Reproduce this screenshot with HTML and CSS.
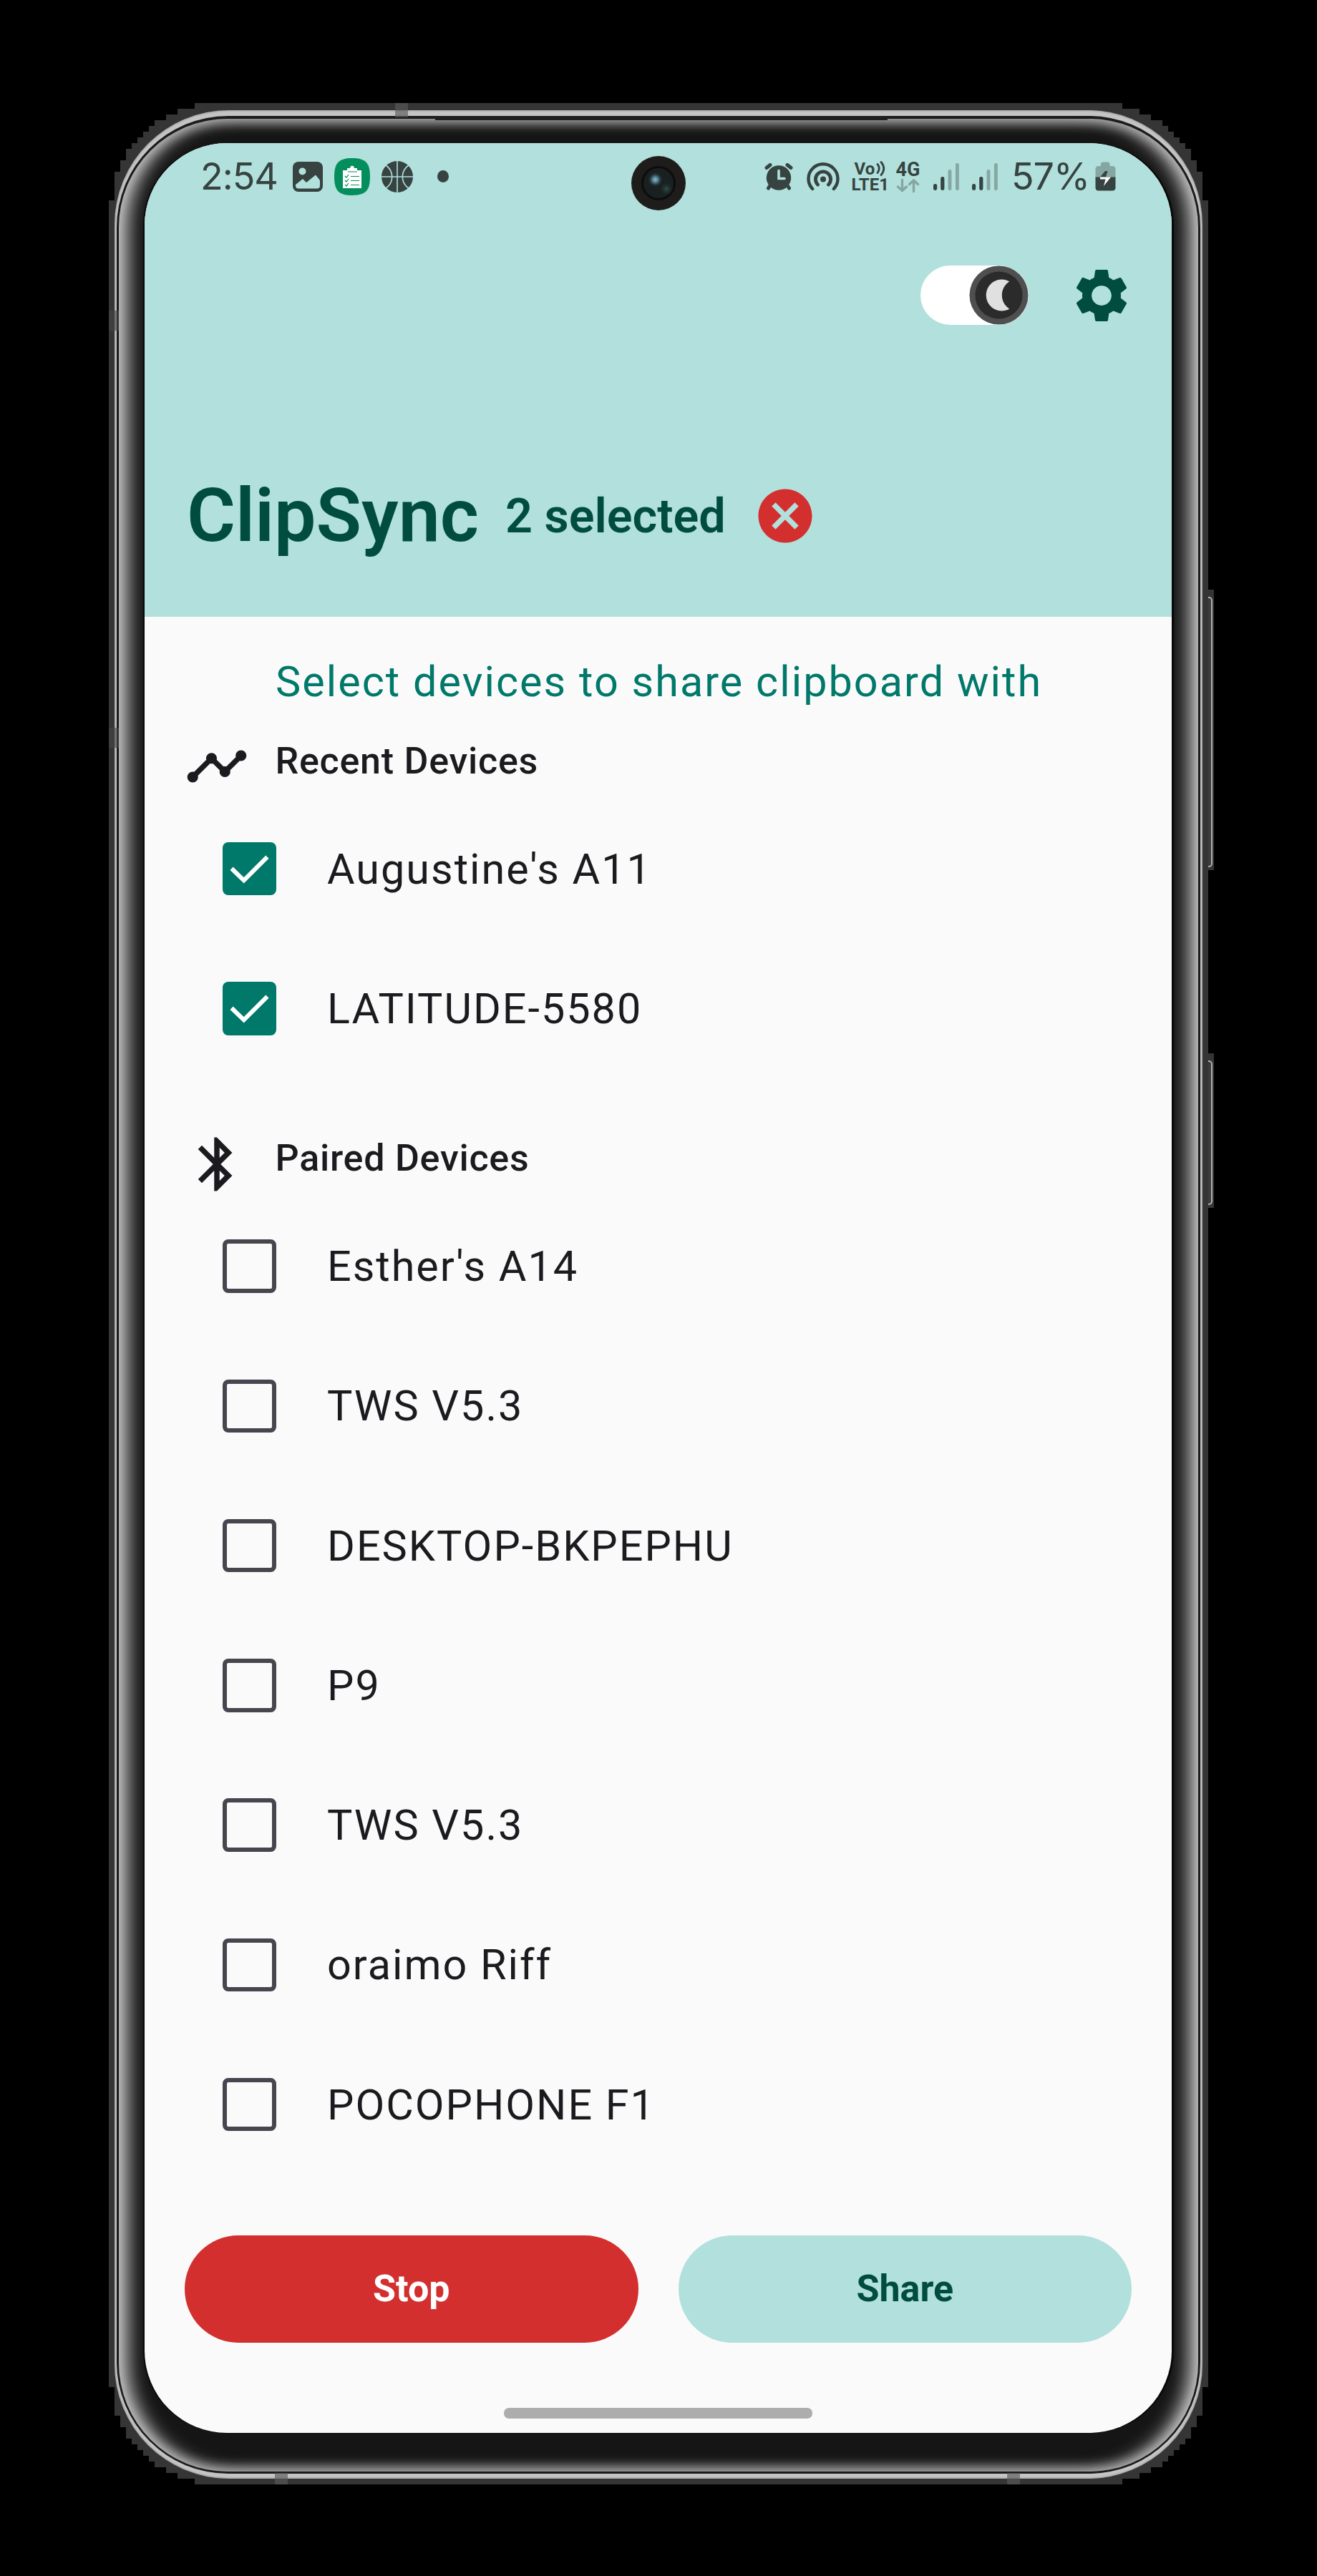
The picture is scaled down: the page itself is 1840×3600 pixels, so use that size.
FILE: index.html
```html
<!DOCTYPE html>
<html lang="en">
<head>
<meta charset="utf-8">
<title>ClipSync</title>
<link rel="stylesheet" href="styles.css">
</head>
<body>
<div class="phone">
  <div class="side-button volume"></div>
  <div class="side-button power"></div>
  <div class="shell"><div class="rim"><div class="groove"><div class="bezel">
    <div class="screen">
      <header class="header">
        <div class="status">
          <div class="status-left">
            <span class="clock">2:54</span>
            <svg class="i-photo" viewBox="0 0 42 42"><rect width="42" height="42" rx="8" fill="#364341"/><circle cx="13.5" cy="13.5" r="5" fill="#b2e0dc"/><path d="M4 32L14 24L19 29L32 18.500L38 26V33.500Q38 37.500 34 37.500H8Q4 37.500 4 33.500Z" fill="#b2e0dc"/></svg>
            <svg class="i-clip" viewBox="0 0 50 52"><path d="M25 0C44 0 50 7 50 26S44 52 25 52S0 45 0 26S6 0 25 0Z" fill="#058e5d"/><path d="M12 17H18V14H22C22 9.500 28 9.500 28 14H32V17H38V42H12Z" fill="#fff"/><path d="M19 19H32M23 25.500H35M23 31.500H35M23 37.500H35M15 25l2 2 3-4M15 31l2 2 3-4M15 37l2 2 3-4" fill="none" stroke="#058e5d" stroke-width="1.200"/></svg>
            <svg class="i-ball" viewBox="0 0 44 44"><circle cx="22" cy="22" r="22" fill="#364341"/><g fill="none" stroke="#b2e0dc" stroke-width="1.600"><path d="M22 0V44M0 22H44M5 5C18 14 18 30 5 39M39 5C26 14 26 30 39 39"/></g></svg>
            <span class="dot"></span>
          </div>
          <div class="status-right">
            <svg class="i-alarm" viewBox="0 0 40 38"><g fill="none" stroke="#364341" stroke-linecap="round"><path d="M3 6.500L8 2.500M32 2.500L37 6.500" stroke-width="5"/><path d="M8 31L5.500 35M32 31L34.500 35" stroke-width="5"/></g><circle cx="20" cy="20.500" r="17.200" fill="#364341"/><path d="M20 10.500V21.500H28" fill="none" stroke="#b2e0dc" stroke-width="3.600" stroke-linecap="round"/></svg>
            <svg class="i-hotspot" viewBox="0 0 46 40"><g fill="none" stroke="#364341" stroke-linecap="round"><path d="M8.200 37A20.500 20.500 0 1 1 37.800 37" stroke-width="4.400"/><path d="M15.500 31A10.600 10.600 0 1 1 30.500 31" stroke-width="4.800"/></g><circle cx="23" cy="23.500" r="4" fill="#364341"/></svg>
            <div class="volte"><span class="vo">Vo<svg viewBox="0 0 13 21"><path d="M2 4.500Q6.500 10 2 16.500M7 1.500Q14.500 10.500 7 19.500" fill="none" stroke="#364341" stroke-width="2.800" stroke-linecap="round"/></svg></span><span class="lte">LTE1</span></div>
            <div class="net"><span>4G</span><svg viewBox="0 0 33 19"><path d="M8.500 1V16.500M2.500 11L8.500 16.500L14.500 11M24.500 17.500V2M18.500 7.500L24.500 2L30.500 7.500" fill="none" stroke="#86a6a2" stroke-width="3.400" stroke-linecap="round"/></svg></div>
            <svg class="i-signal" viewBox="0 0 36 39"><g fill="#364341"><rect y="30" width="5.200" height="9" rx="2.400"/><rect x="10.200" y="20" width="5.200" height="19" rx="2.400"/></g><g fill="#86a6a2"><rect x="20.600" y="10" width="4.800" height="29" rx="2.200"/><rect x="31" y="1" width="4.800" height="38" rx="2.200"/></g></svg>
            <svg class="i-signal second" viewBox="0 0 36 39"><g fill="#364341"><rect y="30" width="5.200" height="9" rx="2.400"/><rect x="10.200" y="20" width="5.200" height="19" rx="2.400"/></g><g fill="#86a6a2"><rect x="20.600" y="10" width="4.800" height="29" rx="2.200"/><rect x="31" y="1" width="4.800" height="38" rx="2.200"/></g></svg>
            <span class="percent">57%</span>
            <svg class="i-battery" viewBox="0 0 29 41"><path d="M8 6V3Q8 .5 10.500 .5H18Q20.500 .5 20.500 3V6H24Q28.500 6 28.500 10.500V22H.5V10.500Q.5 6 5 6Z" fill="#86a6a2"/><path d="M.5 21.500H28.500V36Q28.500 40.500 24 40.500H5Q.5 40.500 .5 36Z" fill="#364341"/><path d="M14 13L7 21.500H15L17.500 13Z" fill="#364341"/><path d="M7 21.500H22L12 34L14.500 24.500H7Z" fill="#fff"/></svg>
          </div>
        </div>
        <div class="toolbar">
          <div class="toggle"><svg viewBox="0 0 84 84"><circle cx="42" cy="42" r="41.500" fill="#4f4f4f"/><circle cx="42" cy="42" r="33.500" fill="#2b2b2b"/><path d="M57 22.600A22.200 22.200 0 1 0 57 61.400A23 23 0 0 1 57 22.600Z" fill="#e0e0e0"/></svg></div>
          <svg class="icon" viewBox="0 0 24 24" fill="#004d40"><path d="M19.140 12.940c.04-.3.06-.61.06-.94 0-.32-.02-.64-.07-.94l2.030-1.580c.18-.14.23-.41.12-.61l-1.920-3.320c-.12-.22-.37-.29-.59-.22l-2.390.96c-.5-.38-1.030-.7-1.620-.94l-.36-2.540c-.04-.24-.24-.41-.48-.41h-3.840c-.24 0-.43.17-.47.41l-.36 2.540c-.59.24-1.130.57-1.620.94l-2.390-.96c-.22-.08-.47 0-.59.22L2.740 8.870c-.12.21-.08.47.12.61l2.030 1.580c-.05.3-.09.63-.09.94s.02.64.07.94l-2.030 1.580c-.18.14-.23.41-.12.61l1.920 3.320c.12.22.37.29.59.22l2.390-.96c.5.38 1.030.7 1.620.94l.36 2.540c.05.24.24.41.48.41h3.840c.24 0 .44-.17.47-.41l.36-2.540c.59-.24 1.130-.56 1.620-.94l2.390.96c.22.08.47 0 .59-.22l1.920-3.320c.12-.22.07-.47-.12-.61l-2.010-1.580zM12 15.700c-2.040 0-3.700-1.660-3.700-3.700s1.660-3.700 3.700-3.700 3.700 1.660 3.700 3.700-1.660 3.700-3.700 3.700z"/></svg>
        </div>
        <div class="title-row">
          <h1>ClipSync</h1>
          <span class="count">2 selected</span>
          <svg class="icon" viewBox="0 0 24 24" fill="#d32f2f"><path d="M12 2C6.470 2 2 6.470 2 12s4.470 10 10 10 10-4.470 10-10S17.530 2 12 2zm5 13.590L15.590 17 12 13.410 8.410 17 7 15.590 10.590 12 7 8.410 8.410 7 12 10.590 15.590 7 17 8.410 13.410 12 17 15.590z"/></svg>
        </div>
      </header>
      <main class="content">
        <p class="hint">Select devices to share clipboard with</p>
        <section>
          <div class="section-head"><svg class="icon" viewBox="0 0 24 24" fill="#1b1b1f"><path d="M23 8c0 1.100-.9 2-2 2-.18 0-.35-.02-.51-.07l-3.560 3.550c.05.16.07.34.07.52 0 1.100-.9 2-2 2s-2-.9-2-2c0-.18.02-.36.07-.52l-2.550-2.550c-.16.05-.34.07-.52.07s-.36-.02-.52-.07l-4.550 4.560c.05.16.07.33.07.51 0 1.100-.9 2-2 2s-2-.9-2-2 .9-2 2-2c.18 0 .35.02.51.07l4.560-4.550C8.020 9.360 8 9.180 8 9c0-1.100.9-2 2-2s2 .9 2 2c0 .18-.02.36-.07.52l2.550 2.550c.16-.05.34-.07.52-.07s.36.02.52.07l3.550-3.560C19.020 8.350 19 8.180 19 8c0-1.100.9-2 2-2s2 .9 2 2z"/></svg><h2>Recent Devices</h2></div>
          <ul>
            <li><span class="box checked"><svg viewBox="0 0 74 74"><path d="M12.500 36.500L29.500 53L62 20.500" fill="none" stroke="#fff" stroke-width="6"/></svg></span>Augustine's A11</li>
            <li><span class="box checked"><svg viewBox="0 0 74 74"><path d="M12.500 36.500L29.500 53L62 20.500" fill="none" stroke="#fff" stroke-width="6"/></svg></span>LATITUDE-5580</li>
          </ul>
        </section>
        <section>
          <div class="section-head"><svg class="icon" viewBox="0 0 24 24" fill="#1b1b1f"><path d="M17.710 7.710L12 2h-1v7.590L6.410 5 5 6.410 10.590 12 5 17.590 6.410 19 11 14.410V22h1l5.710-5.710-4.300-4.290 4.300-4.290zM13 5.830l1.880 1.880L13 9.590V5.830zm1.880 10.460L13 18.170v-3.760l1.880 1.880z"/></svg><h2>Paired Devices</h2></div>
          <ul>
            <li><span class="box"></span>Esther's A14</li>
            <li><span class="box"></span>TWS V5.3</li>
            <li><span class="box"></span>DESKTOP-BKPEPHU</li>
            <li><span class="box"></span>P9</li>
            <li><span class="box"></span>TWS V5.3</li>
            <li><span class="box"></span>oraimo Riff</li>
            <li><span class="box"></span>POCOPHONE F1</li>
          </ul>
        </section>
      </main>
      <footer class="footer">
        <div class="actions"><button class="stop">Stop</button><button class="share">Share</button></div>
        <div class="home-bar"></div>
      </footer>
      <svg class="camera" viewBox="0 0 76 76"><defs><radialGradient id="glint"><stop offset="0" stop-color="#8dbbd2"/><stop offset=".4" stop-color="#52788b"/><stop offset="1" stop-color="#1a2628" stop-opacity="0"/></radialGradient><radialGradient id="glow"><stop offset="0" stop-color="#2f5148"/><stop offset="1" stop-color="#1a2424" stop-opacity="0"/></radialGradient></defs><circle cx="38" cy="38" r="38" fill="#1f1d1b"/><circle cx="38" cy="38" r="22.500" fill="#192020" stroke="#0d0d0d" stroke-width="3"/><circle cx="49" cy="46" r="10" fill="url(#glow)"/><circle cx="33.500" cy="33" r="10.500" fill="url(#glint)"/></svg>
    </div>
  </div></div></div>
    <span class="speaker"></span>
    <span class="band top"></span><span class="band left"></span><span class="band left lower"></span><span class="band bottom-left"></span><span class="band bottom-right"></span>
  </div>
</div>
</body>
</html>
```
FILE: styles.css
```css
* { box-sizing: border-box; }
body { margin: 0; height: 3600px; background: #000; padding: 144px 152px 0; font-family: Roboto, sans-serif; overflow: hidden; }
h1, h2, p, ul { margin: 0; padding: 0; }
svg { display: block; flex: none; }

.phone { position: relative; width: 1536px; }
.shell {
  position: relative; width: 1536px; height: 3328px; padding: 10px 8px 8px; background: #353535;
  clip-path: polygon(0 136px, 8px 136px, 8px 96px, 16px 96px, 16px 80px, 24px 80px, 24px 64px, 32px 64px, 32px 56px, 40px 56px, 40px 48px, 48px 48px, 48px 40px, 56px 40px, 56px 32px, 64px 32px, 64px 24px, 80px 24px, 80px 16px, 96px 16px, 96px 8px, 120px 8px, 120px 0,
    1416px 0, 1416px 8px, 1440px 8px, 1440px 16px, 1456px 16px, 1456px 24px, 1472px 24px, 1472px 32px, 1480px 32px, 1480px 40px, 1488px 40px, 1488px 48px, 1496px 48px, 1496px 56px, 1504px 56px, 1504px 64px, 1512px 64px, 1512px 80px, 1520px 80px, 1520px 96px, 1528px 96px, 1528px 136px, 1536px 136px,
    1536px 3192px, 1528px 3192px, 1528px 3232px, 1520px 3232px, 1520px 3248px, 1512px 3248px, 1512px 3264px, 1504px 3264px, 1504px 3272px, 1496px 3272px, 1496px 3280px, 1488px 3280px, 1488px 3288px, 1480px 3288px, 1480px 3296px, 1472px 3296px, 1472px 3304px, 1456px 3304px, 1456px 3312px, 1440px 3312px, 1440px 3320px, 1416px 3320px, 1416px 3328px,
    120px 3328px, 120px 3320px, 96px 3320px, 96px 3312px, 80px 3312px, 80px 3304px, 64px 3304px, 64px 3296px, 56px 3296px, 56px 3288px, 48px 3288px, 48px 3280px, 40px 3280px, 40px 3272px, 32px 3272px, 32px 3264px, 24px 3264px, 24px 3248px, 16px 3248px, 16px 3232px, 8px 3232px, 8px 3192px, 0 3192px);
}
.rim { height: 3310px; padding: 8px 3px 7px; border-radius: 160px; background: #c4c4c4; box-shadow: inset 0 0 3px #777; }
.groove { height: 3295px; padding: 4px 3px 3px; border-radius: 156px; background: #1c1c1c; }
.bezel {
  height: 3288px; padding: 34px 37px 54px 36px; border-radius: 152px; background: #151515;
  box-shadow: inset 18px 0 26px -5px #c4c4c4, inset -18px 0 26px -5px #c4c4c4, inset 0 8px 14px -2px #5e5e5e, inset 0 -8px 14px -2px #5e5e5e;
}
.screen { position: relative; display: flex; flex-direction: column; height: 3200px; border-radius: 115px; overflow: hidden; background: #fafafa; box-shadow: -2px 0 #080808, 3px 0 #080808; }

.speaker { position: absolute; left: 456px; top: 18px; width: 632px; height: 6px; background: #1f1f1f; }
.band { position: absolute; background: rgba(90, 90, 90, .65); }
.band.top { left: 400px; top: 0; width: 18px; height: 20px; }
.band.left { left: 0; top: 290px; width: 14px; height: 28px; background: rgba(70, 70, 70, .6); }
.band.left.lower { top: 873px; }
.band.bottom-left { left: 232px; bottom: 0; width: 18px; height: 16px; }
.band.bottom-right { left: 1255px; bottom: 0; width: 18px; height: 16px; }

.side-button { position: absolute; left: 1528px; width: 16px; background: #353535; padding: 10px 2px 8px 4px; }
.side-button::before { content: ""; display: block; height: 100%; border: 2px solid #b0b0b0; border-left: 0; border-radius: 0 5px 5px 0; background: #3c3c3c; }
.volume { top: 680px; height: 392px; }
.power { top: 1328px; height: 216px; }

.header { height: 662px; flex: none; background: #b2e0dc; color: #004d40; }
.status { display: flex; justify-content: space-between; height: 93px; padding: 0 78px 0 78px; color: #364341; }
.status-left, .status-right { display: flex; align-items: center; }
.clock, .percent { font: 400 52px/60px Inter, sans-serif; letter-spacing: -1px; white-space: nowrap; }
.clock { width: 129px; }
.i-photo { width: 42px; height: 42px; }
.i-clip { width: 50px; height: 52px; margin-left: 16px; }
.i-ball { width: 44px; height: 44px; margin-left: 16px; }
.dot { width: 16px; height: 17px; margin-left: 34px; border-radius: 50%; background: #364341; }
.i-alarm { width: 40px; height: 38px; margin-right: 19px; }
.i-hotspot { width: 46px; height: 40px; margin-right: 17px; }
.volte { width: 50px; margin-right: 12px; font: 700 24px/22px Roboto, sans-serif; display: flex; flex-direction: column; }
.vo { display: flex; align-items: center; padding-left: 4px; }
.vo svg { width: 13px; height: 21px; margin-left: 2px; }
.lte { font-size: 24px; }
.net { width: 34px; margin-right: 18px; font: 700 27px/24px Roboto, sans-serif; }
.net span { display: block; }
.net svg { width: 33px; height: 19px; margin-top: 1px; }
.i-signal { width: 36px; height: 39px; margin-right: 18.500px; }
.i-signal.second { margin-right: 19px; }
.percent { width: 117px; }
.i-battery { width: 29px; height: 41px; }

.icon { width: 90px; height: 90px; }
.toolbar { display: flex; justify-content: flex-end; align-items: center; gap: 57px; height: 90px; margin-top: 74.500px; padding-right: 53px; }
.toggle { width: 151px; height: 83px; border-radius: 42px; background: #fff; display: flex; justify-content: flex-end; }
.toggle svg { width: 83px; height: 83px; }
.title-row { display: flex; align-items: center; height: 90px; margin-top: 218.500px; padding-left: 59px; }
h1 { width: 445px; font-size: 104px; font-weight: 600; line-height: 90px; }
.count { width: 346px; font-size: 66.500px; font-weight: 600; white-space: nowrap; }

.content { padding-top: 61px; font-size: 59.300px; color: #1b1b1f; }
.hint { padding-left: 183px; line-height: 60px; letter-spacing: 2.060px; color: #00796b; white-space: nowrap; }
.section-head { display: flex; align-items: center; height: 91px; padding-left: 55.500px; margin-top: 42.500px; }
h2 { margin-left: 37px; font-size: 52px; font-weight: 500; line-height: 60px; padding-bottom: 15px; letter-spacing: .75px; }
section + section .section-head { margin-top: 74px; }
ul { list-style: none; }
li { display: flex; align-items: center; height: 195.250px; padding-left: 109px; gap: 71.500px; letter-spacing: 2px; white-space: nowrap; }
.box { width: 74.500px; height: 74.500px; flex: none; border: 6.500px solid #46464f; border-radius: 8px; }
.box.checked { border: 0; background: #00796b; }

.footer { margin-top: auto; padding: 0 56px 20px; }
.actions { display: grid; grid-template-columns: 1fr 1fr; gap: 56px; }
button { height: 150px; border: 0; border-radius: 75px; font: 700 52px/60px Roboto, sans-serif; }
.stop { background: #d32f2f; color: #fff; }
.share { background: #b2e0dc; color: #004d40; }
.home-bar { width: 431px; height: 15px; margin: 91px auto 0; border-radius: 7px; background: #adadad; }

.camera { position: absolute; left: 680px; top: 18px; width: 76px; height: 76px; }
```
